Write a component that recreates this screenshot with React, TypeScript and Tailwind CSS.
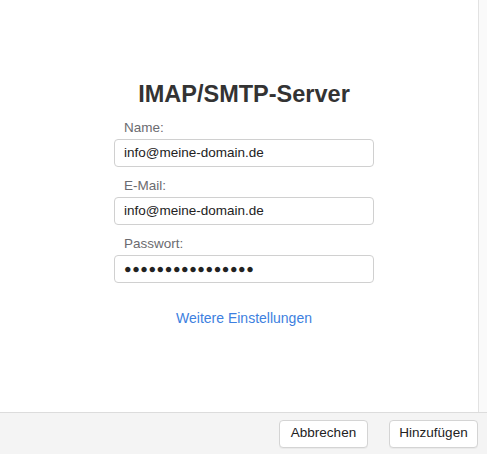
import React from "react";

const font = { fontFamily: '"Liberation Sans", Arial, sans-serif' };

function Field({ label, value, password }: { label: string; value: string; password?: boolean }) {
  return (
    <div className="flex flex-col">
      <div className="h-[23px] pl-[10px] text-[13.5px] leading-[23px] text-[#6b6b70]">{label}</div>
      <div className="flex h-[28px] w-[260px] items-center rounded-[4px] border border-[#d0d0d0] bg-white pl-[9px] text-[13.5px] text-[#222]">
        {password ? <span className="text-[12.5px] tracking-[0.6px] text-[#222]">{"●".repeat(16)}</span> : value}
      </div>
    </div>
  );
}

export default function App() {
  return (
    <div className="flex h-[454px] w-[487px] flex-col overflow-hidden bg-white" style={font}>
      <div className="flex flex-1">
        <div className="flex w-[479px] flex-col items-center border-r border-[#e2e2e2] bg-white pl-[10px] pt-[79px]">
          <h1 className="text-[23.5px] font-bold leading-[30px] text-[#333]">IMAP/SMTP-Server</h1>
          <div className="mt-[7px] flex flex-col gap-[7px]">
            <Field label="Name:" value="info@meine-domain.de" />
            <Field label="E-Mail:" value="info@meine-domain.de" />
            <Field label="Passwort:" value="" password />
          </div>
          <div className="mt-[25px] text-[14px] text-[#3d7fe0]">Weitere Einstellungen</div>
        </div>
        <div className="flex-1 bg-[#fafafa]" />
      </div>
      <div className="flex h-[42px] items-center justify-end gap-[21px] border-t border-[#dcdcdc] bg-[#f4f4f4] pr-[9px]">
        <button className="h-[28px] w-[89px] rounded-[4px] border border-[#d4d4d4] bg-white text-[13.5px] text-[#222] shadow-[0_1px_0_rgba(0,0,0,0.04)]">Abbrechen</button>
        <button className="h-[28px] w-[89px] rounded-[4px] border border-[#d4d4d4] bg-white text-[13.5px] text-[#222] shadow-[0_1px_0_rgba(0,0,0,0.04)]">Hinzufügen</button>
      </div>
    </div>
  );
}
